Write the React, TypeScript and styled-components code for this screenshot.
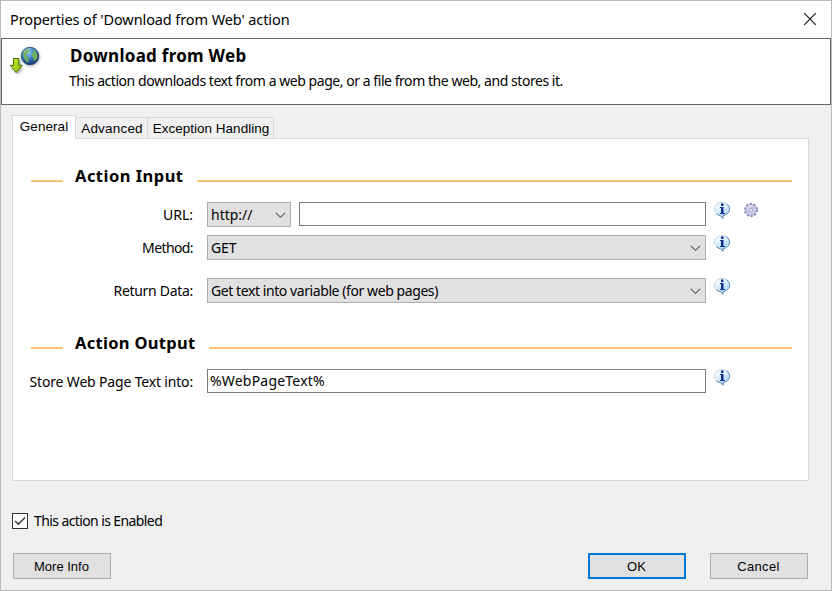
import React from "react";
import styled, { createGlobalStyle } from "styled-components";

const GlobalStyle = createGlobalStyle`
  * { box-sizing: border-box; }
  body { margin: 0; background: #f0f0f0; color: #000; }
`;

const Dialog = styled.div`
  width: 832px;
  height: 591px;
  display: flex;
  flex-direction: column;
  border: 1px solid #b9b9b9;
  background: #f0f0f0;
  overflow: hidden;
  font: 14px/20px "Noto Sans", sans-serif;
`;

const TitleBar = styled.header`
  height: 37px;
  flex: none;
  display: flex;
  align-items: center;
  justify-content: space-between;
  padding: 0 14px 2px 9px;
  background: #fff;
`;

const Label = styled.span<{ $track?: number }>`
  letter-spacing: ${(p) => p.$track ?? 0}px;
  white-space: nowrap;
`;

const Title = styled(Label)`
  font-size: 14.5px;
`;

const Banner = styled.section`
  height: 67px;
  flex: none;
  display: flex;
  padding: 7px 0 0 7px;
  border: 1px solid #646464;
  background: #fff;
`;

const BannerText = styled.div`
  display: flex;
  flex-direction: column;
  padding-left: 26px;
`;

const BannerTitle = styled.h1`
  margin: 0 0 0 1px;
  font-size: 17px;
  line-height: 20px;
  letter-spacing: 0.27px;
`;

const BannerCopy = styled(Label)`
  margin-top: 5px;
  line-height: 20px;
`;

const Tabs = styled.nav`
  height: 24px;
  flex: none;
  display: flex;
  align-items: flex-end;
  margin: 10px 0 0 11px;
  position: relative;
`;

const Tab = styled.button<{ $active?: boolean; $width: number }>`
  width: ${(p) => p.$width}px;
  height: ${(p) => (p.$active ? 24 : 22)}px;
  padding: ${(p) => (p.$active ? "0 0 2px" : "1px 0 0 1px")};
  border: 1px solid #d9d9d9;
  border-width: ${(p) => (p.$active ? "1px 1px 0 1px" : "1px 1px 1px 0")};
  background: ${(p) => (p.$active ? "#fff" : "#f0f0f0")};
  color: #000;
  font: 13.5px/20px "Liberation Sans", sans-serif;
  text-align: center;
`;

const Panel = styled.main`
  width: 797px;
  height: 343px;
  flex: none;
  margin: -1px 0 0 11px;
  padding: 25px 16px 0 18px;
  border: 1px solid #d9d9d9;
  background: #fff;
`;

const Section = styled.div<{ $gap?: number }>`
  display: flex;
  height: 24px;
  margin-top: ${(p) => p.$gap ?? 0}px;
`;

const Rule = styled.div<{ $width?: number }>`
  flex: ${(p) => (p.$width ? "none" : 1)};
  width: ${(p) => (p.$width ? `${p.$width}px` : "auto")};
  height: 2px;
  margin-top: 16px;
  background: #ffc07c;
`;

const SectionTitle = styled.h2<{ $track: number; $width: number }>`
  width: ${(p) => p.$width}px;
  margin: 0;
  padding-left: 12px;
  font-size: 16.5px;
  line-height: 24px;
  letter-spacing: ${(p) => p.$track}px;
  white-space: nowrap;
`;

const Row = styled.div<{ $gap: number }>`
  display: flex;
  height: 25px;
  margin: ${(p) => p.$gap}px 0 0 -18px;
`;

const RowLabel = styled(Label)`
  width: 180px;
  margin-right: 14px;
  text-align: right;
  line-height: 26px;
`;

const Select = styled.div<{ $width: number }>`
  width: ${(p) => p.$width}px;
  height: 25px;
  flex: none;
  display: flex;
  align-items: center;
  justify-content: space-between;
  padding: 0 4px 0 3px;
  border: 1px solid #adadad;
  background: #e1e1e1;
`;

const Field = styled.div<{ $width: number }>`
  width: ${(p) => p.$width}px;
  height: 24px;
  flex: none;
  display: flex;
  align-items: center;
  padding-left: 2px;
  border: 1px solid #7a7a7a;
  background: #fff;
`;

const IconSlot = styled.span<{ $gap: number }>`
  display: block;
  height: 18px;
  margin-left: ${(p) => p.$gap}px;
  svg { display: block; }
`;

const Enabled = styled.label`
  display: flex;
  align-items: center;
  height: 20px;
  gap: 6px;
  margin: 30px 0 0 11px;
`;

const Box = styled.span`
  width: 16px;
  height: 16px;
  flex: none;
  border: 1px solid #333;
  background: #fff;
  svg { display: block; }
`;

const Footer = styled.footer`
  display: flex;
  margin: 22px 0 0 12px;
`;

const Button = styled.button<{ $primary?: boolean; $gap?: number; $track?: number }>`
  width: 98px;
  height: 26px;
  margin-left: ${(p) => p.$gap ?? 0}px;
  padding: 2px 1px 0 0;
  border: ${(p) => (p.$primary ? "2px solid #0078d7" : "1px solid #adadad")};
  background: #e1e1e1;
  color: #000;
  font: 13px/20px "Liberation Sans", sans-serif;
  letter-spacing: ${(p) => p.$track ?? 0}px;
`;

const CloseIcon = () => (
  <svg width="14" height="14" viewBox="0 0 14 14">
    <path d="M1.2 1.2 L12.8 12.8 M12.8 1.2 L1.2 12.8" stroke="#111" strokeWidth="1.1" />
  </svg>
);

const Chevron = () => (
  <svg width="12" height="8" viewBox="0 0 12 8">
    <path d="M1.8 1.8 L6.5 6.3 L11.2 1.8" fill="none" stroke="#555" strokeWidth="1.1" />
  </svg>
);

const GlobeIcon = () => (
  <svg width="34" height="34" viewBox="0 0 34 34">
    <defs>
      <radialGradient id="sea" cx=".4" cy=".3" r=".7">
        <stop offset="0" stopColor="#9ccdf2" />
        <stop offset=".5" stopColor="#3d80c8" />
        <stop offset="1" stopColor="#123569" />
      </radialGradient>
      <linearGradient id="leaf" x2="1" y2="1">
        <stop offset="0" stopColor="#c8ef37" />
        <stop offset="1" stopColor="#82bd00" />
      </linearGradient>
      <filter id="soft" x="-30%" y="-30%" width="160%" height="160%">
        <feGaussianBlur stdDeviation="1.1" />
      </filter>
    </defs>
    <g fill="#555" opacity=".4" filter="url(#soft)">
      <circle cx="22" cy="11.5" r="9" />
      <path d="M6 14h6v8h3l-6 7-6-7h3z" />
    </g>
    <circle cx="21" cy="10" r="8.8" fill="url(#sea)" stroke="#24406f" strokeWidth=".8" />
    <g fill="#78b552" opacity=".9">
      <path d="M14 6.5l3-3.2 3.5-.3.5 1.6-2 1.6-1 2.4-1.8.6 2 1.4 1.8 1.8-.8 3-1.4 1.6-1.2-3-2-2.6z" />
      <path d="M23.5 3l3 2 2 3.4.1 3.2-2.2 3-1.6.6-.4-3.4-1.8-1.8.8-2.6 1.4-1.6z" />
    </g>
    <path d="M15 6.8q2.4-4.2 7-4" fill="none" stroke="#e3f6f4" strokeWidth="1" opacity=".5" />
    <path d="M4.5 12.5h5.4v6.8h3.3L7.2 26.7 1.2 19.3h3.3z" fill="url(#leaf)" stroke="#4a6f08" strokeWidth="1" />
  </svg>
);

const InfoIcon = () => (
  <svg width="18" height="18" viewBox="0 0 18 18">
    <defs>
      <linearGradient id="bubble" x2=".7" y2="1">
        <stop offset="0" stopColor="#fff" />
        <stop offset=".5" stopColor="#dceffd" />
        <stop offset="1" stopColor="#9dcff5" />
      </linearGradient>
    </defs>
    <path d="M9 .5C4.8.5 1.4 3.3 1.4 7.1c0 3.3 2.5 5.8 6 6.5l2.6 2.7v-2.7c3.8-.5 6.6-3.2 6.6-6.5C16.6 3.3 13.2.5 9 .5z" fill="url(#bubble)" stroke="#bccedd" strokeWidth=".9" />
    <path d="M13.6 1.9c1.9 1.2 3 3 3 5.2 0 3.3-2.8 6-6.6 6.5v2.7l-2.6-2.7c-1.6-.3-3-1-4.1-2" fill="none" stroke="#5f8db6" strokeWidth="1" />
    <path d="M8 1.5h2.5V4H8zM7 5h3.5v6H12v1H7v-1h1V6H7z" fill="#10308f" />
  </svg>
);

const GearIcon = () => (
  <svg width="16" height="16" viewBox="0 0 16 16">
    <circle cx="8" cy="8" r="6.1" fill="none" stroke="#8583b3" strokeWidth="1.9" strokeDasharray="2.1 1.73" />
    <circle cx="8" cy="8" r="5.5" fill="#cbc9e9" stroke="#9a97c6" strokeWidth=".8" />
    <path d="M4.6 6.3A4 4 0 0 1 9 4.1" stroke="#e4e3f7" strokeWidth="1.3" fill="none" />
    <circle cx="8" cy="8" r="1.5" fill="#fff" stroke="#9a98c4" strokeWidth=".8" />
  </svg>
);

const Info = () => <IconSlot $gap={7}><InfoIcon /></IconSlot>;

export default function App() {
  return (
    <>
      <GlobalStyle />
      <Dialog>
        <TitleBar>
          <Title $track={-0.1}>Properties of 'Download from Web' action</Title>
          <CloseIcon />
        </TitleBar>
        <Banner>
          <GlobeIcon />
          <BannerText>
            <BannerTitle>Download from Web</BannerTitle>
            <BannerCopy $track={-0.45}>This action downloads text from a web page, or a file from the web, and stores it.</BannerCopy>
          </BannerText>
        </Banner>
        <Tabs>
          <Tab $active $width={64}><Label $track={0.05}>General</Label></Tab>
          <Tab $width={72}><Label $track={0.2}>Advanced</Label></Tab>
          <Tab $width={126}><Label>Exception Handling</Label></Tab>
        </Tabs>
        <Panel>
          <Section>
            <Rule $width={32} />
            <SectionTitle $track={0.47} $width={134}>Action Input</SectionTitle>
            <Rule />
          </Section>
          <Row $gap={14}>
            <RowLabel>URL:</RowLabel>
            <Select $width={84}><Label>http://</Label><Chevron /></Select>
            <IconSlot $gap={8}><Field $width={407} /></IconSlot>
            <Info />
            <IconSlot $gap={12}><GearIcon /></IconSlot>
          </Row>
          <Row $gap={8}>
            <RowLabel $track={-0.6}>Method:</RowLabel>
            <Select $width={499}><Label $track={-0.1}>GET</Label><Chevron /></Select>
            <Info />
          </Row>
          <Row $gap={18}>
            <RowLabel $track={-0.3}>Return Data:</RowLabel>
            <Select $width={499}><Label $track={-0.42}>Get text into variable (for web pages)</Label><Chevron /></Select>
            <Info />
          </Row>
          <Section $gap={28}>
            <Rule $width={32} />
            <SectionTitle $track={0.3} $width={146}>Action Output</SectionTitle>
            <Rule />
          </Section>
          <Row $gap={14}>
            <RowLabel $track={-0.17}>Store Web Page Text into:</RowLabel>
            <Field $width={499}><Label $track={0.2}>%WebPageText%</Label></Field>
            <Info />
          </Row>
        </Panel>
        <Enabled>
          <Box>
            <svg width="14" height="14" viewBox="0 0 14 14">
              <path d="M2 7 L5.3 10.3 L12 3.5" fill="none" stroke="#333" strokeWidth="1.4" />
            </svg>
          </Box>
          <Label $track={-0.6}>This action is Enabled</Label>
        </Enabled>
        <Footer>
          <Button>More Info</Button>
          <Button $primary $gap={477}>OK</Button>
          <Button $gap={24} $track={0.3}>Cancel</Button>
        </Footer>
      </Dialog>
    </>
  );
}
